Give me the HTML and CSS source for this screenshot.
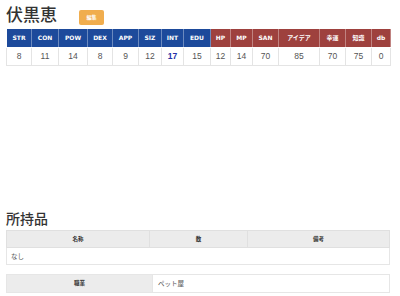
FILE: index.html
```html
<!DOCTYPE html>
<html lang="ja">
<head>
  <meta charset="UTF-8" />
  <title>伏黒恵</title>
  <link rel="stylesheet" href="styles.css">
</head>
<body>
  <div class="page">
    <div class="name-row">
      <h1 class="name">伏黒恵</h1>
      <span class="edit-btn">編集</span>
    </div>

    <table class="stats">
      <thead>
        <tr>
          <th class="ab">STR</th>
          <th class="ab">CON</th>
          <th class="ab">POW</th>
          <th class="ab">DEX</th>
          <th class="ab">APP</th>
          <th class="ab">SIZ</th>
          <th class="ab">INT</th>
          <th class="ab">EDU</th>
          <th class="sub">HP</th>
          <th class="sub">MP</th>
          <th class="sub">SAN</th>
          <th class="sub">アイデア</th>
          <th class="sub">幸運</th>
          <th class="sub">知識</th>
          <th class="sub">db</th>
        </tr>
      </thead>
      <tbody>
        <tr>
          <td>8</td>
          <td>11</td>
          <td>14</td>
          <td>8</td>
          <td>9</td>
          <td>12</td>
          <td class="high">17</td>
          <td>15</td>
          <td>12</td>
          <td>14</td>
          <td>70</td>
          <td>85</td>
          <td>70</td>
          <td>75</td>
          <td>0</td>
        </tr>
      </tbody>
    </table>

    <h2 class="section">所持品</h2>
    <table class="items">
      <thead>
        <tr>
          <th>名称</th>
          <th>数</th>
          <th>備考</th>
        </tr>
      </thead>
      <tbody>
        <tr>
          <td colspan="3">なし</td>
        </tr>
      </tbody>
    </table>

    <table class="profile">
      <tr>
        <th>職業</th>
        <td>ペット屋</td>
      </tr>
    </table>
  </div>
</body>
</html>
```

FILE: styles.css
```css
* {
  margin: 0;
  padding: 0;
  box-sizing: border-box;
}

html, body {
  width: 100%;
  height: 100%;
  overflow: hidden;
  background: #fff;
  font-family: "Liberation Sans", "Noto Sans CJK JP", sans-serif;
  color: #555;
}

.page {
  padding: 2px 10px 0 6px;
}

.name-row {
  display: flex;
  align-items: center;
  height: 27px;
}

.name {
  font-size: 17px;
  font-weight: 500;
  color: #333;
  line-height: 1;
}

.edit-btn {
  margin-left: 22px;
  margin-top: 4px;
  width: 25px;
  height: 15px;
  line-height: 15px;
  border-radius: 2px;
  background: #f0ad4e;
  color: #fff;
  font-size: 5px;
  font-weight: bold;
  text-align: center;
}

table {
  border-collapse: collapse;
  width: 384px;
}

.stats {
  table-layout: fixed;
}

.stats th {
  height: 18px;
  font-family: "DejaVu Sans", "Noto Sans CJK JP", sans-serif;
  font-size: 6px;
  font-weight: bold;
  color: #fff;
  border: 1px solid rgba(255, 255, 255, 0.35);
  border-top: none;
}

.stats th.ab {
  background: #1d4a9b;
}

.stats th.sub {
  background: #9e413e;
}

.stats th:nth-child(1) { width: 25px; }
.stats th:nth-child(2) { width: 27px; }
.stats th:nth-child(3) { width: 29px; }
.stats th:nth-child(4) { width: 25px; }
.stats th:nth-child(5) { width: 26px; }
.stats th:nth-child(6) { width: 23px; }
.stats th:nth-child(7) { width: 22px; }
.stats th:nth-child(8) { width: 27px; }
.stats th:nth-child(9) { width: 20px; }
.stats th:nth-child(10) { width: 22px; }
.stats th:nth-child(11) { width: 26px; }
.stats th:nth-child(12) { width: 41px; }
.stats th:nth-child(13) { width: 26px; }
.stats th:nth-child(14) { width: 26px; }
.stats th:nth-child(15) { width: 19px; }

.stats td {
  height: 18px;
  font-size: 8.5px;
  text-align: center;
  color: #555;
  border: 1px solid #e4e4e4;
}

.stats td.high {
  color: #2430a8;
  font-weight: bold;
}

.section {
  margin-top: 143px;
  font-size: 14px;
  font-weight: 500;
  color: #333;
  line-height: 20px;
}

.items {
  margin-top: 1px;
  table-layout: fixed;
}

.items th {
  height: 17px;
  background: #ececec;
  border: 1px solid #e0e0e0;
  font-size: 5.5px;
  font-weight: bold;
  color: #333;
}

.items th:nth-child(1) { width: 143px; }
.items th:nth-child(2) { width: 98px; }

.items td {
  height: 17px;
  padding-left: 4px;
  border: 1px solid #e6e6e6;
  font-size: 6.5px;
  color: #555;
}

.profile {
  margin-top: 9px;
  table-layout: fixed;
}

.profile th {
  width: 146px;
  height: 18px;
  background: #ececec;
  border: 1px solid #e6e6e6;
  font-size: 5.5px;
  font-weight: bold;
  color: #333;
}

.profile td {
  padding-left: 5px;
  border: 1px solid #e6e6e6;
  font-size: 6.5px;
  color: #555;
}
```
